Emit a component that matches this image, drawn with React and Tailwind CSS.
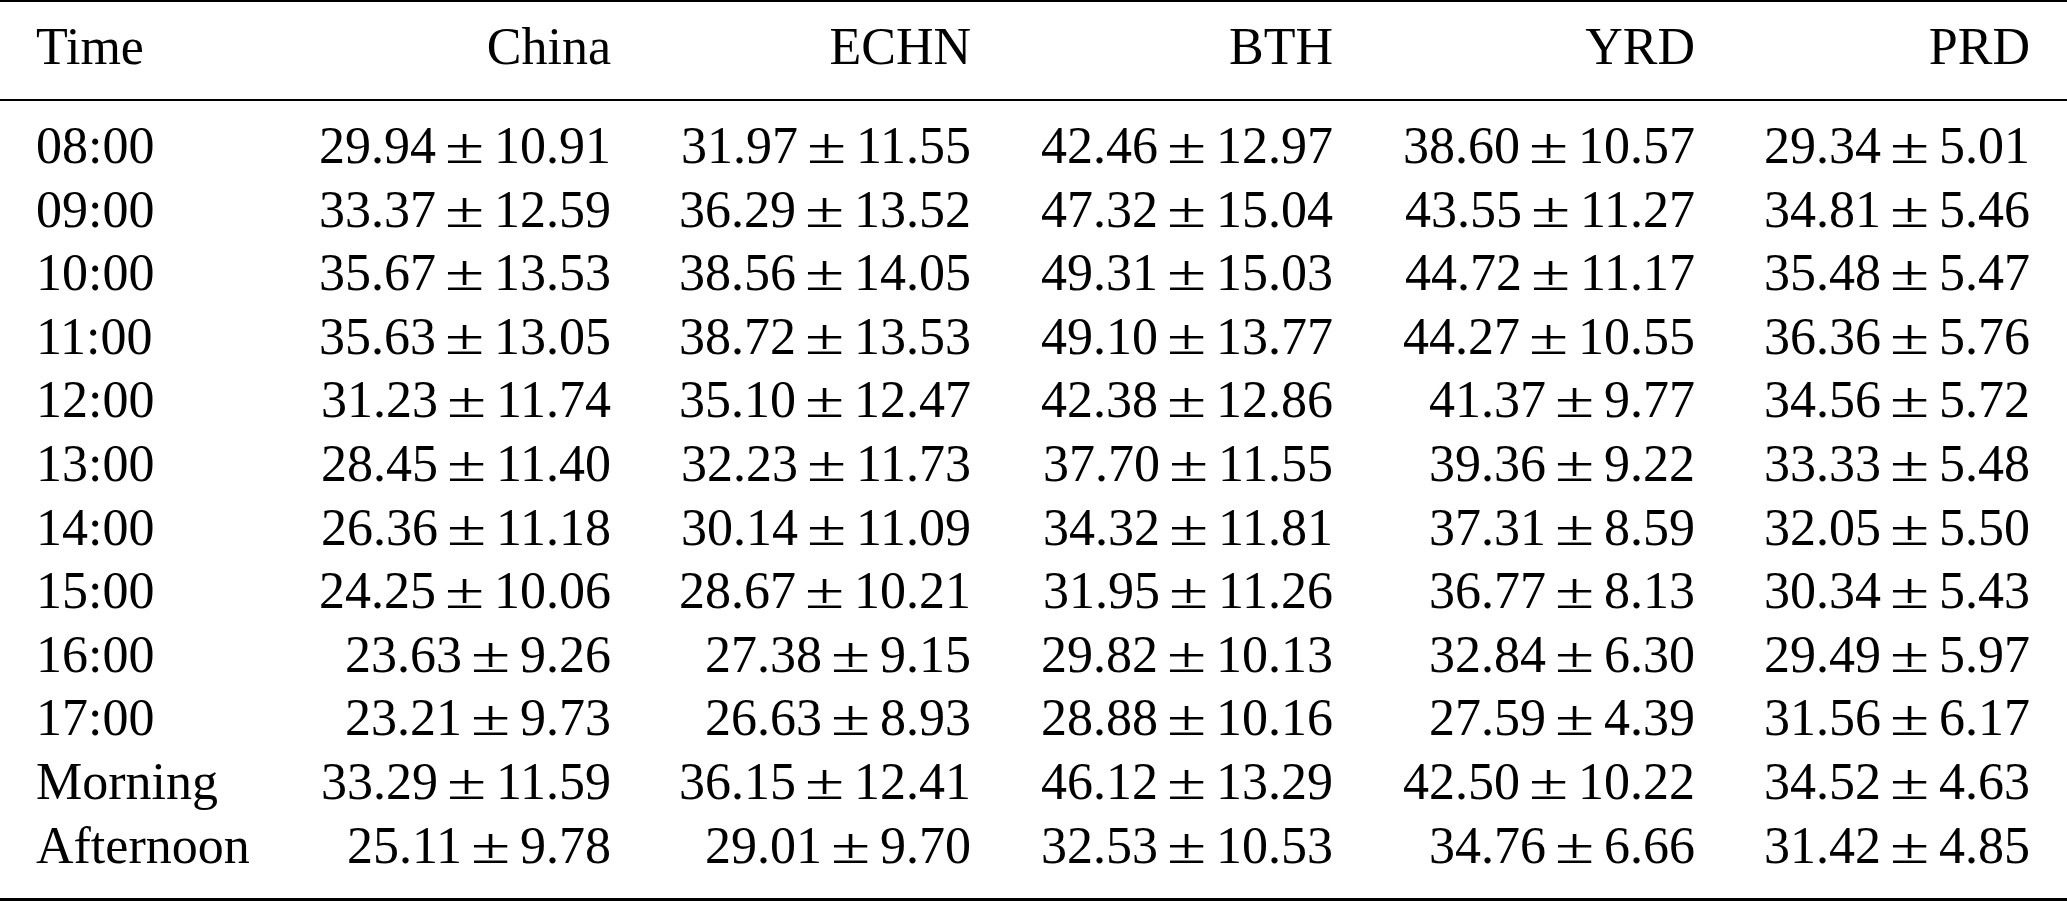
import React from "react";

const rows = [
  ["08:00", "29.94", "10.91", "31.97", "11.55", "42.46", "12.97", "38.60", "10.57", "29.34", "5.01"],
  ["09:00", "33.37", "12.59", "36.29", "13.52", "47.32", "15.04", "43.55", "11.27", "34.81", "5.46"],
  ["10:00", "35.67", "13.53", "38.56", "14.05", "49.31", "15.03", "44.72", "11.17", "35.48", "5.47"],
  ["11:00", "35.63", "13.05", "38.72", "13.53", "49.10", "13.77", "44.27", "10.55", "36.36", "5.76"],
  ["12:00", "31.23", "11.74", "35.10", "12.47", "42.38", "12.86", "41.37", "9.77", "34.56", "5.72"],
  ["13:00", "28.45", "11.40", "32.23", "11.73", "37.70", "11.55", "39.36", "9.22", "33.33", "5.48"],
  ["14:00", "26.36", "11.18", "30.14", "11.09", "34.32", "11.81", "37.31", "8.59", "32.05", "5.50"],
  ["15:00", "24.25", "10.06", "28.67", "10.21", "31.95", "11.26", "36.77", "8.13", "30.34", "5.43"],
  ["16:00", "23.63", "9.26", "27.38", "9.15", "29.82", "10.13", "32.84", "6.30", "29.49", "5.97"],
  ["17:00", "23.21", "9.73", "26.63", "8.93", "28.88", "10.16", "27.59", "4.39", "31.56", "6.17"],
  ["Morning", "33.29", "11.59", "36.15", "12.41", "46.12", "13.29", "42.50", "10.22", "34.52", "4.63"],
  ["Afternoon", "25.11", "9.78", "29.01", "9.70", "32.53", "10.53", "34.76", "6.66", "31.42", "4.85"],
];

const headers = ["China", "ECHN", "BTH", "YRD", "PRD"];

function Val({ a, b }) {
  return (
    <div className="text-right whitespace-nowrap">
      {a}
      <span className="inline-block w-[58px] text-center">
        <span className="inline-block text-[50px] leading-none scale-x-[1.43]">±</span>
      </span>
      {b}
    </div>
  );
}

export default function App() {
  const grid =
    "grid grid-cols-[283px_292px_360px_362px_362px_335px] pl-[36px] pr-[37px]";
  return (
    <div
      className="w-[2067px] h-[901px] bg-white text-black text-[52px] leading-[63.6px] overflow-hidden"
      style={{ fontFamily: '"Liberation Serif", "Times New Roman", serif' }}
    >
      <div className="h-[2px] bg-black" />
      <div className={`${grid} pt-[13px] pb-[20.4px]`}>
        <div>Time</div>
        {headers.map((h) => (
          <div key={h} className="text-right">
            {h}
          </div>
        ))}
      </div>
      <div className="h-[2px] bg-black" />
      <div className={`${grid} pt-[13px] pb-[21px]`}>
        {rows.map((r) => (
          <React.Fragment key={r[0]}>
            <div className="whitespace-nowrap">{r[0]}</div>
            <Val a={r[1]} b={r[2]} />
            <Val a={r[3]} b={r[4]} />
            <Val a={r[5]} b={r[6]} />
            <Val a={r[7]} b={r[8]} />
            <Val a={r[9]} b={r[10]} />
          </React.Fragment>
        ))}
      </div>
      <div className="h-[3px] bg-black" />
    </div>
  );
}
